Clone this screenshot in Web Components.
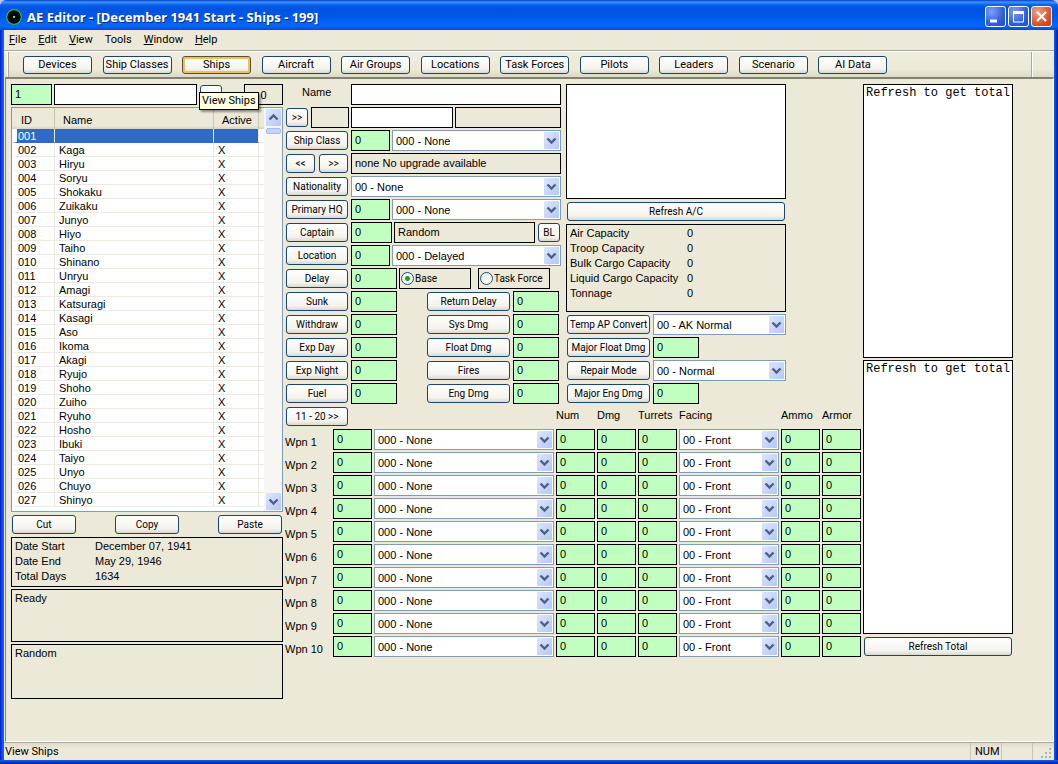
<!DOCTYPE html>
<html lang="en">
<head>
<meta charset="utf-8">
<title>AE Editor - [December 1941 Start - Ships - 199]</title>
<style>
  html { background: #b9c3e6; }
  body {
    margin: 0;
    --ui: 11px/14px Roboto, "Liberation Sans", sans-serif;
    --form: 11px/15px "Liberation Sans", sans-serif;
    --face: #ece9d8;
    --entry: #c0ffc0;
    --line: #7f9db9;
    font: var(--ui);
    color: #000;
  }
</style>
</head>
<body>
<editor-window></editor-window>

<script>
class XpElement extends HTMLElement {
  constructor() { super(); this.attachShadow({ mode: 'open' }); }
  connectedCallback() {
    if (this.shadowRoot.childNodes.length) return;
    this.shadowRoot.innerHTML =
      '<style>*{box-sizing:border-box}:host{box-sizing:border-box}' +
      this.constructor.css + '</style>' + this.html();
  }
  attr(name, fallback = '') { return this.getAttribute(name) ?? fallback; }
}

const chevron = (d) => `<svg viewBox="0 0 15 17" width="15" height="17" aria-hidden="true">
  <defs><linearGradient id="g" x1="0" y1="0" x2="1" y2="1"><stop offset="0" stop-color="#dde6fd"/><stop offset="1" stop-color="#b4c7f6"/></linearGradient></defs>
  <rect width="15" height="17" rx="1" fill="url(#g)"/>
  <path d="${d}" fill="none" stroke="#4d6185" stroke-width="2.4"/></svg>`;
const DOWN = 'M3.5 6.5 7.5 10.5 11.5 6.5';
const UP = 'M3.5 10.5 7.5 6.5 11.5 10.5';

class XpButton extends XpElement {
  static css = `
    :host { display: block; padding: 1px; height: 21px; flex: none; }
    button {
      display: block; width: 100%; height: 100%; padding: 0; margin: 0;
      border: 1px solid #1c4470; border-radius: 3px;
      background: linear-gradient(#fff, #f4f3ee 75%, #dcd8cc);
      font: 10px/16px Roboto, "Liberation Sans", sans-serif; color: #000; white-space: nowrap;
    }
    :host([tool]) { height: 20px; }
    :host([tool]) button { font: var(--ui); }
    :host([active]) button { box-shadow: inset 0 0 0 2px #f0c060; border-color: #5a5030; }`;
  html() { return `<button type="button" aria-label="${this.attr('label', this.textContent)}"><slot></slot></button>`; }
}
customElements.define('xp-button', XpButton);

class XpField extends XpElement {
  static formAssociated = true;
  static css = `
    :host { display: block; height: 21px; width: 39px; flex: none; }
    input {
      display: block; width: 100%; height: 100%; margin: 0; padding: 0 3px 2px;
      border: 1px solid #000; border-radius: 0; background: var(--entry);
      font: var(--form); color: #000; outline: 0;
    }
    :host([plain]) input { background: #fff; }
    :host([flat]) input { background: var(--face); }
    :host([centered]) input { text-align: center; padding: 0 3px; }`;
  html() {
    return `<input type="text" aria-label="${this.attr('label')}" value="${this.attr('value')}"${this.hasAttribute('flat') ? ' readonly' : ''}>`;
  }
}
customElements.define('xp-field', XpField);

class XpSelect extends XpElement {
  static css = `
    :host { display: grid; height: 21px; flex: 1; min-width: 0; grid-template-columns: minmax(0, 1fr) 17px; }
    select {
      grid-area: 1 / 1 / 2 / 3; appearance: none; width: 100%; height: 21px; margin: 0; padding: 1px 18px 0 3px;
      border: 1px solid var(--line); border-radius: 0; background: #fff; font: var(--form); color: #000;
    }
    svg { grid-area: 1 / 2; align-self: center; pointer-events: none; }`;
  html() {
    return `<select aria-label="${this.attr('label')}"><option>${this.attr('value')}</option></select>${chevron(DOWN)}`;
  }
}
customElements.define('xp-select', XpSelect);

class XpPanel extends XpElement {
  static css = `
    :host { display: block; border: 1px solid #000; padding: 1px 3px; font: var(--form); }`;
  html() { return '<slot></slot>'; }
}
customElements.define('xp-panel', XpPanel);

class XpLog extends XpElement {
  static css = `
    :host { display: block; }
    textarea {
      display: block; width: 100%; height: 100%; margin: 0; padding: 1px 0 0 2px; resize: none; overflow: hidden;
      border: 1px solid #000; border-radius: 0; background: #fff; white-space: pre;
      font: 12px/14px "Liberation Mono", monospace; color: #000;
    }`;
  html() { return `<textarea aria-label="${this.attr('label')}">${this.attr('value')}</textarea>`; }
}
customElements.define('xp-log', XpLog);

class TitleBar extends XpElement {
  static css = `
    :host {
      display: flex; align-items: center; height: 30px; padding: 3px 6px 0; color: #fff;
      border-radius: 7px 7px 0 0;
      background: linear-gradient(#0a3fc4, #3d95ff 7%, #0a62ee 16%, #0053e0 30%, #0058e8 55%, #0066fc 80%, #0064f8 90%, #0048d0);
    }
    h1 { margin: 0 auto 0 5px; font: bold 13px/16px "Noto Sans", sans-serif; text-shadow: 1px 1px 0 #0a2a80; white-space: nowrap; }
    .controls { display: flex; gap: 2px; }
    button {
      width: 21px; height: 21px; padding: 0; border: 1px solid #fff; border-radius: 3px; display: block;
      background: radial-gradient(circle at 30% 25%, #7f9ff5, #2f5fe0 60%, #1d4ad0);
    }
    button.close { background: radial-gradient(circle at 30% 25%, #f0a088, #dd5530 60%, #c23c18); }
    svg { display: block; }`;
  html() {
    const btn = (name, cls, art) => `<button type="button" class="${cls}" aria-label="${name}"><svg width="19" height="19" viewBox="0 0 19 19" aria-hidden="true">${art}</svg></button>`;
    return `
      <svg width="16" height="16" viewBox="0 0 16 16" aria-hidden="true">
        <circle cx="8" cy="8" r="7.3" fill="#000" stroke="#23c552" stroke-width="1.2"/>
        <circle cx="8" cy="8" r="1.2" fill="#6fe08a"/>
      </svg>
      <h1>AE Editor - [December 1941 Start - Ships - 199]</h1>
      <div class="controls">
        ${btn('Minimize', '', '<path d="M4 12.5h7v3H4z" fill="#fff"/>')}
        ${btn('Maximize', '', '<path d="M4.5 5v10h10V5" fill="none" stroke="#fff"/><path d="M4 4h11v3H4z" fill="#fff"/>')}
        ${btn('Close', 'close', '<path d="M5 5l9 9M14 5l-9 9" stroke="#fff" stroke-width="2.2"/>')}
      </div>`;
  }
}
customElements.define('title-bar', TitleBar);

class MenuBar extends XpElement {
  static css = `
    :host { display: block; height: 21px; border-bottom: 1px solid #aca899; }
    nav { display: flex; gap: 12px; padding: 3px 5px; }
    a { color: #000; text-decoration: none; font: var(--ui); }
    u { text-underline-offset: 1px; }`;
  html() {
    return '<nav aria-label="Menu">' + ['<u>F</u>ile', '<u>E</u>dit', '<u>V</u>iew', 'Tools', '<u>W</u>indow', '<u>H</u>elp']
      .map(t => `<a href="#">${t}</a>`).join('') + '</nav>';
  }
}
customElements.define('menu-bar', MenuBar);

class ToolBar extends XpElement {
  static css = `
    :host {
      display: flex; height: 26px; border-top: 1px solid #fff; padding-left: 3px;
      background: linear-gradient(#efecde, #ece9d8 70%, #ddd9c8);
    }
    .grip { width: 2px; border-left: 1px solid #fff; border-right: 1px solid #aca899; }
    nav { display: grid; flex: 0 1 875px; grid-template-columns: repeat(11, 1fr); padding-top: 3px; margin-left: 13px; }
    xp-button { width: 71px; }
    .end { margin-left: auto; width: 23px; border-left: 1px solid #aca899; box-shadow: inset 1px 0 #fff; }`;
  html() {
    const names = ['Devices', 'Ship Classes', 'Ships', 'Aircraft', 'Air Groups', 'Locations', 'Task Forces', 'Pilots', 'Leaders', 'Scenario', 'AI Data'];
    return '<div class="grip"></div><nav aria-label="Views">' +
      names.map(n => `<xp-button tool${n === 'Ships' ? ' active' : ''}>${n}</xp-button>`).join('') +
      '</nav><div class="end"></div>';
  }
}
customElements.define('tool-bar', ToolBar);

class ShipTable extends XpElement {
  static css = `
    :host { display: grid; grid-template-columns: 1fr 18px; height: 405px; border: 1px solid var(--line); background: #fff; }
    .rows { overflow: hidden; }
    table { width: 100%; border-spacing: 0; table-layout: fixed; font: 11px/12px "Liberation Sans", sans-serif; }
    col.id { width: 43px; } col.active { width: 45px; } col.rest { width: 5px; }
    th {
      height: 21px; padding: 2px 0 0 8px; text-align: left; font-weight: normal;
      background: linear-gradient(#ece9d8 85%, #d6d2c2); border-right: 1px solid #c8c4b4;
    }
    th:first-child { padding-left: 9px; } th:last-child { border: 0; }
    td { height: 14px; padding: 1px 0 0 4px; border: solid #ebe9e0; border-width: 0 1px 1px 0; white-space: nowrap; }
    td:last-child, th:last-child { padding: 0; border-right: 0; }
    td:first-child { padding-left: 1px; border-left: 5px solid #fff; }
    tr.current td { background: #316ac5; color: #fff; border-bottom-color: #316ac5; background-clip: padding-box; }
    tr.current td:last-child { background: none; border-color: #ebe9e0; }
    .bar { display: flex; flex-direction: column; align-items: center; padding: 1px 0; background: #f6f5f1; }
    .bar svg { display: block; flex: none; }
    .thumb { width: 15px; height: 6px; margin: 2px 0 auto; border-radius: 2px; background: #c4d4fb; border: 1px solid #a5bbee; }`;
  html() {
    const names = ',Kaga,Hiryu,Soryu,Shokaku,Zuikaku,Junyo,Hiyo,Taiho,Shinano,Unryu,Amagi,Katsuragi,Kasagi,Aso,Ikoma,Akagi,Ryujo,Shoho,Zuiho,Ryuho,Hosho,Ibuki,Taiyo,Unyo,Chuyo,Shinyo'.split(',');
    const rows = names.map((n, i) => `<tr${i ? '' : ' class="current"'}><td>${String(i + 1).padStart(3, '0')}</td><td>${n}</td><td>${n ? 'X' : ''}</td><td></td></tr>`).join('');
    return `<div class="rows"><table><colgroup><col class="id"><col><col class="active"><col class="rest"></colgroup>
      <thead><tr><th>ID</th><th>Name</th><th>Active</th><th></th></tr></thead><tbody>${rows}</tbody></table></div>
      <div class="bar">${chevron(UP)}<div class="thumb"></div>${chevron(DOWN)}</div>`;
  }
}
customElements.define('ship-table', ShipTable);

class ShipBrowser extends XpElement {
  static css = `
    :host { display: flex; flex-direction: column; gap: 2px; min-width: 0; }
    .find { display: flex; gap: 2px; position: relative; }
    .find > :nth-child(2) { flex: 1; }
    .find > :nth-child(4) { margin-left: 19px; }
    .tip {
      position: absolute; left: 188px; top: 8px; padding: 1px 2px; background: #ffffe1;
      border: 1px solid #000; box-shadow: 2px 2px 2px #0006; font: var(--ui); white-space: nowrap;
    }
    .edit { display: flex; justify-content: space-between; }
    .edit xp-button { width: 66px; }
    dl { display: grid; grid-template-columns: 80px 1fr; margin: 0; }
    dd { margin: 0; }
    .ready { height: 53px; } .random { height: 55px; }
    .dates { height: 50px; }`;
  html() {
    return `
      <div class="find">
        <xp-field style="width:41px" label="Ship ID" value="1"></xp-field>
        <xp-field plain label="Find ship"></xp-field>
        <xp-button style="width:24px" label="Find"></xp-button>
        <xp-field flat centered label="Count" value="0"></xp-field>
        <div class="tip" role="tooltip">View Ships</div>
      </div>
      <ship-table></ship-table>
      <div class="edit"><xp-button>Cut</xp-button><xp-button>Copy</xp-button><xp-button>Paste</xp-button></div>
      <xp-panel class="dates"><dl>
        <dt>Date Start</dt><dd>December 07, 1941</dd>
        <dt>Date End</dt><dd>May 29, 1946</dd>
        <dt>Total Days</dt><dd>1634</dd>
      </dl></xp-panel>
      <xp-panel class="ready">Ready</xp-panel>
      <xp-panel class="random">Random</xp-panel>`;
  }
}
customElements.define('ship-browser', ShipBrowser);

class ShipForm extends XpElement {
  static css = `
    :host {
      display: grid; column-gap: 5px; min-width: 0;
      grid-template-columns: minmax(0, 276fr) minmax(0, 220fr) minmax(0, 70fr);
    }
    .main, .side { display: flex; flex-direction: column; gap: 2px; min-width: 0; }
    .row { display: flex; gap: 2px; height: 21px; }
    .key { width: 64px; }
    .pair { display: flex; gap: 2px; width: 64px; } .pair > * { flex: 1; }
    .grow { flex: 1; }
    .w46 { width: 46px; }
    .wide { width: 85px; }
    .right { margin-left: auto; } .row > .last { margin-right: 2px; }
    label { font: var(--form); }
    .name { width: 64px; padding: 1px 0 0 17px; }
    .choice {
      display: flex; align-items: center; gap: 1px; width: 72px; border: 1px solid #000;
      font: 10px/14px Roboto, "Liberation Sans", sans-serif; white-space: nowrap; padding-left: 1px;
    }
    .choice + .choice { margin-left: 5px; }
    input[type=radio] {
      appearance: none; margin: 0; width: 13px; height: 13px; border: 1px solid #1c5180; border-radius: 50%; flex: none;
      background: radial-gradient(circle at 65% 65%, #fff, #e2e0d8);
    }
    input[type=radio]:checked { background: radial-gradient(circle, #21a121 0 2px, #f4f3ee 3px); }
    .planes { height: 115px; }
    .capacity { height: 88px; }
    dl { display: grid; grid-template-columns: 117px 1fr; margin: 0; white-space: nowrap; }
    dd { margin: 0; }`;
  html() {
    const stat = (left, right) => `<div class="row"><xp-button class="key">${left}</xp-button><xp-field class="w46" label="${left}" value="0"></xp-field>
      <xp-button class="wide right">${right}</xp-button><xp-field class="w46 last" label="${right}" value="0"></xp-field></div>`;
    const pick = (name, value) => `<div class="row"><xp-button class="key">${name}</xp-button><xp-field label="${name} number" value="0"></xp-field><xp-select label="${name}" value="${value}"></xp-select></div>`;
    return `
      <div class="main">
        <div class="row"><label class="name" for="name">Name</label><xp-field plain id="name" class="grow" label="Name"></xp-field></div>
        <div class="row"><xp-button style="width:24px">&gt;&gt;</xp-button><xp-field flat style="width:38px" label="Code"></xp-field><xp-field plain style="width:102px" label="Bitmap"></xp-field><xp-field flat class="grow" label="Bitmap name"></xp-field></div>
        ${pick('Ship Class', '000 - None')}
        <div class="row"><div class="pair"><xp-button>&lt;&lt;</xp-button><xp-button>&gt;&gt;</xp-button></div><xp-field flat class="grow" label="Upgrade" value="none No upgrade available"></xp-field></div>
        <div class="row"><xp-button class="key">Nationality</xp-button><xp-select label="Nationality" value="00 - None"></xp-select></div>
        ${pick('Primary HQ', '000 - None')}
        <div class="row"><xp-button class="key">Captain</xp-button><xp-field style="width:41px" label="Captain" value="0"></xp-field><xp-field flat class="grow" label="Captain name" value="Random"></xp-field><xp-button style="width:24px">BL</xp-button></div>
        ${pick('Location', '000 - Delayed')}
        <div class="row"><xp-button class="key">Delay</xp-button><xp-field class="w46" label="Delay" value="0"></xp-field>
          <label class="choice"><input type="radio" name="at" checked>Base</label><label class="choice"><input type="radio" name="at">Task Force</label></div>
        ${stat('Sunk', 'Return Delay')}${stat('Withdraw', 'Sys Dmg')}${stat('Exp Day', 'Float Dmg')}${stat('Exp Night', 'Fires')}${stat('Fuel', 'Eng Dmg')}
      </div>
      <div class="side">
        <xp-log class="planes" label="Aircraft"></xp-log>
        <xp-button>Refresh A/C</xp-button>
        <xp-panel class="capacity"><dl>
          <dt>Air Capacity</dt><dd>0</dd><dt>Troop Capacity</dt><dd>0</dd><dt>Bulk Cargo Capacity</dt><dd>0</dd>
          <dt>Liquid Cargo Capacity</dt><dd>0</dd><dt>Tonnage</dt><dd>0</dd>
        </dl></xp-panel>
        <div class="row"><xp-button class="wide">Temp AP Convert</xp-button><xp-select label="Temp AP Convert" value="00 - AK Normal"></xp-select></div>
        <div class="row"><xp-button class="wide">Major Float Dmg</xp-button><xp-field class="w46" label="Major Float Dmg" value="0"></xp-field></div>
        <div class="row"><xp-button class="wide">Repair Mode</xp-button><xp-select label="Repair Mode" value="00 - Normal"></xp-select></div>
        <div class="row"><xp-button class="wide">Major Eng Dmg</xp-button><xp-field class="w46" label="Major Eng Dmg" value="0"></xp-field></div>
      </div>`;
  }
}
customElements.define('ship-form', ShipForm);

class WeaponGrid extends XpElement {
  static css = `
    :host {
      display: grid; gap: 2px; min-width: 0; font: var(--form);
      grid-template-columns: 46px 39px minmax(0, 180fr) repeat(3, 39px) minmax(0, 100fr) repeat(2, 39px);
      grid-auto-rows: 21px;
    }
    xp-button { grid-column: 1 / 3; width: 64px; }
    .head { padding-top: 2px; white-space: nowrap; }
    .num { grid-column: 4; }
    label { padding-top: 6px; white-space: nowrap; }`;
  html() {
    const head = ['Num', 'Dmg', 'Turrets', 'Facing', 'Ammo', 'Armor'].map((t, i) => `<span class="head${i ? '' : ' num'}">${t}</span>`).join('');
    let rows = '';
    for (let i = 1; i <= 10; i++) {
      const f = (n, id = '') => `<xp-field${id} label="Wpn ${i} ${n}" value="0"></xp-field>`;
      rows += `<label for="w${i}">Wpn ${i}</label>${f('device', ` id="w${i}"`)}<xp-select label="Wpn ${i} device name" value="000 - None"></xp-select>
        ${f('num')}${f('dmg')}${f('turrets')}<xp-select label="Wpn ${i} facing" value="00 - Front"></xp-select>${f('ammo')}${f('armor')}`;
    }
    return `<xp-button>11 - 20 &gt;&gt;</xp-button>${head}${rows}`;
  }
}
customElements.define('weapon-grid', WeaponGrid);

class TotalsPane extends XpElement {
  static css = `
    :host { display: flex; flex-direction: column; gap: 2px; min-width: 0; }
    xp-log { height: 274px; }`;
  html() {
    return `<xp-log label="First total" value="Refresh to get total"></xp-log>
      <xp-log label="Second total" value="Refresh to get total"></xp-log><xp-button>Refresh Total</xp-button>`;
  }
}
customElements.define('totals-pane', TotalsPane);

class StatusBar extends XpElement {
  static css = `
    :host {
      display: flex; height: 18px; padding: 0 1px; border-top: 1px solid #aca899;
      background: linear-gradient(#dedac9, #ece9d8 5px); font: 11px/17px Roboto, "Liberation Sans", sans-serif;
    }
    span { margin-right: auto; }
    .cell { width: 31px; padding-left: 4px; border-left: 1px solid #c9c5b4; }
    .grip { width: 21px; border-left: 1px solid #c9c5b4; display: flex; align-items: flex-end; justify-content: flex-end; }
    svg { display: block; }`;
  html() {
    return `<span>View Ships</span><div class="cell">NUM</div><div class="cell"></div>
      <div class="grip"><svg width="13" height="13" viewBox="0 0 13 13" fill="#b8b4a2" aria-hidden="true">
      <path d="M9 1h2v2H9zM5 5h2v2H5zM9 5h2v2H9zM1 9h2v2H1zM5 9h2v2H5zM9 9h2v2H9z"/></svg></div>`;
  }
}
customElements.define('status-bar', StatusBar);

class EditorWindow extends XpElement {
  static css = `
    :host {
      display: flex; flex-direction: column; min-height: 100vh; border-radius: 7px 7px 0 0;
      background: linear-gradient(90deg, #0019cf, #1560f0 3px, #0c50e0 calc(100% - 3px), #001a9c);
    }
    .body {
      flex: 1; display: flex; flex-direction: column; margin: 0 4px; background: var(--face);
    }
    main {
      flex: 1; display: grid; align-content: start; column-gap: 2px;
      grid-template-columns: minmax(0, 272fr) minmax(0, 576fr) minmax(0, 150fr);
      margin: 0 0 0 1px; padding: 5px 40px 6px 5px;
      border: solid; border-width: 2px 1px 1px; border-color: #85816f #fff #fff #85816f;
    }
    .middle { display: flex; flex-direction: column; gap: 2px; min-width: 0; }
    .foot { height: 4px; background: linear-gradient(#1560f0, #001a9c); }`;
  html() {
    return `<title-bar></title-bar>
      <div class="body"><menu-bar></menu-bar><tool-bar></tool-bar>
        <main><ship-browser></ship-browser>
          <div class="middle"><ship-form></ship-form><weapon-grid></weapon-grid></div>
          <totals-pane></totals-pane></main>
        <status-bar></status-bar></div>
      <div class="foot"></div>`;
  }
}
customElements.define('editor-window', EditorWindow);
</script>
</body>
</html>
